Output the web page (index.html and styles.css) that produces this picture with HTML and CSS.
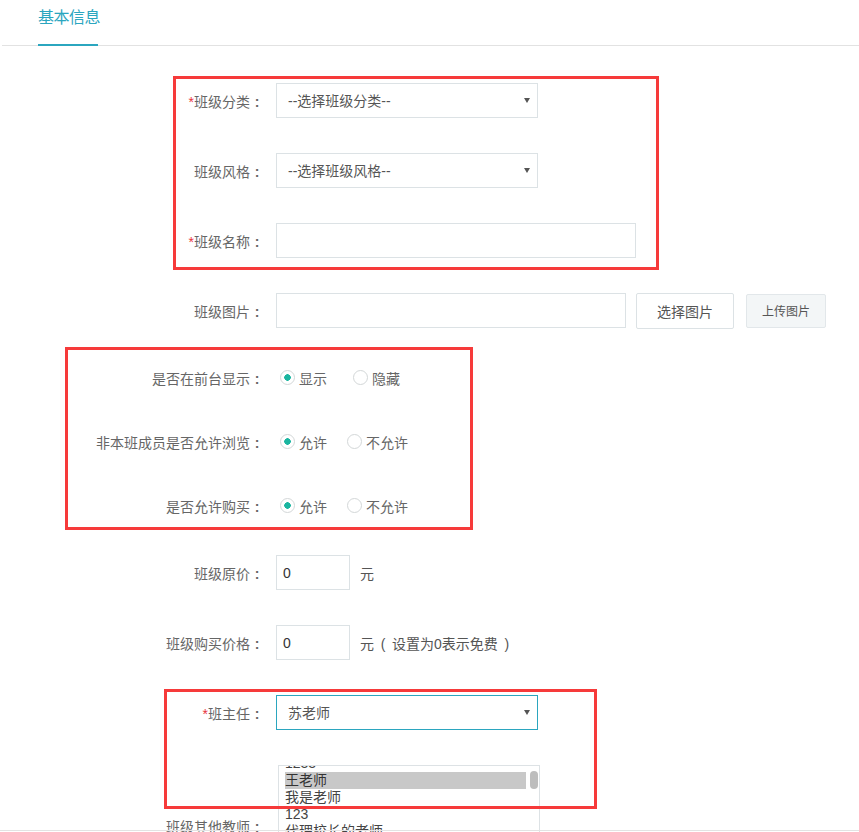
FILE: index.html
```html
<!DOCTYPE html>
<html lang="zh-CN">
<head>
  <meta charset="UTF-8">
  <title>班级设置 - 基本信息</title>
  <link rel="stylesheet" href="styles.css">
</head>
<body>

  <div class="tabs">
    <a class="tab active">基本信息</a>
  </div>

  <form class="form">
    <div class="row">
      <label class="label"><em>*</em>班级分类<i>:</i></label>
      <div class="select">
        <select><option>--选择班级分类--</option></select>
      </div>
    </div>

    <div class="row">
      <label class="label">班级风格<i>:</i></label>
      <div class="select">
        <select><option>--选择班级风格--</option></select>
      </div>
    </div>

    <div class="row">
      <label class="label"><em>*</em>班级名称<i>:</i></label>
      <input class="text name" type="text">
    </div>

    <div class="row">
      <label class="label">班级图片<i>:</i></label>
      <input class="text picture" type="text">
      <button type="button" class="btn">选择图片</button>
      <button type="button" class="btn btn-light">上传图片</button>
    </div>

    <div class="row radios">
      <label class="label">是否在前台显示<i>:</i></label>
      <label class="option wide"><input type="radio" name="show" checked>显示</label>
      <label class="option"><input type="radio" name="show">隐藏</label>
    </div>

    <div class="row radios">
      <label class="label">非本班成员是否允许浏览<i>:</i></label>
      <label class="option"><input type="radio" name="browse" checked>允许</label>
      <label class="option"><input type="radio" name="browse">不允许</label>
    </div>

    <div class="row radios">
      <label class="label">是否允许购买<i>:</i></label>
      <label class="option"><input type="radio" name="buy" checked>允许</label>
      <label class="option"><input type="radio" name="buy">不允许</label>
    </div>

    <div class="row">
      <label class="label">班级原价<i>:</i></label>
      <input class="text price" type="text" value="0">
      <span class="unit">元</span>
    </div>

    <div class="row">
      <label class="label">班级购买价格<i>:</i></label>
      <input class="text price" type="text" value="0">
      <span class="unit">元<i>(</i>设置为0表示免费<i>)</i></span>
    </div>

    <div class="row">
      <label class="label"><em>*</em>班主任<i>:</i></label>
      <div class="select focus">
        <select><option>苏老师</option></select>
      </div>
    </div>

    <div class="row teachers">
      <label class="label">班级其他教师<i>:</i></label>
      <div class="listbox">
        <ul class="list">
          <li>1233</li>
          <li class="selected">王老师</li>
          <li>我是老师</li>
          <li>123</li>
          <li>代理校长的老师</li>
          <li>李老师</li>
          <li>张老师</li>
        </ul>
        <span class="thumb"></span>
      </div>
    </div>
  </form>

  <!-- annotation boxes -->
  <div class="mark mark-1"></div>
  <div class="mark mark-2"></div>
  <div class="mark mark-3"></div>

  <div class="bottom-line"></div>

</body>
</html>
```

FILE: styles.css
```css
body {
  margin: 0;
  position: relative;
  font-family: "Liberation Sans", "Noto Sans CJK SC", sans-serif;
  font-size: 14px;
  color: #666;
  background: #fff;
}

.tabs {
  display: flex;
  align-items: flex-end;
  height: 45px;
  margin-left: 2px;
  border-bottom: 1px solid #e2e2e2;
}

.tab {
  display: block;
  width: 60px;
  margin-left: 36px;
  margin-bottom: -1px;
  height: 44px;
  line-height: 36px;
  text-align: center;
  font-size: 16px;
  letter-spacing: -0.5px;
  white-space: nowrap;
  color: #2ba6bf;
  border-bottom: 2px solid #2ba6bf;
}

.form {
  margin: 37px 0 0;
}

.row {
  display: flex;
  align-items: center;
  height: 35px;
  margin-bottom: 35px;
}

.label {
  width: 264px;
  margin-right: 12px;
  flex-shrink: 0;
  text-align: right;
  white-space: nowrap;
  color: #666;
}

.label em {
  font-style: normal;
  color: #e8323c;
}

/* full-width punctuation, glyph centred in its box */
.label i,
.unit i {
  display: inline-block;
  width: 14px;
  text-align: center;
  font-style: normal;
  font-weight: bold;
}

.select {
  position: relative;
  width: 262px;
  height: 35px;
}

.select select {
  width: 100%;
  height: 35px;
  padding: 0 11px;
  border: 1px solid #dce2e5;
  border-radius: 0;
  background: #fff;
  font: inherit;
  color: #555;
  -webkit-appearance: none;
  appearance: none;
  outline: none;
}

.select::after {
  content: "";
  position: absolute;
  right: 8px;
  top: 15px;
  border-left: 3px solid transparent;
  border-right: 3px solid transparent;
  border-top: 5px solid #555;
}

.select.focus select {
  border-color: #2ba6bf;
}

.text {
  box-sizing: border-box;
  height: 35px;
  padding: 0 6px;
  border: 1px solid #dce2e5;
  font: inherit;
  color: #333;
  outline: none;
}

.name { width: 360px; }
.picture { width: 350px; }
.price { width: 74px; }

.unit {
  margin-left: 10px;
  color: #555;
}

.unit i {
  font-weight: normal;
  margin: 0 2px;
}

.btn {
  height: 36px;
  width: 98px;
  margin-left: 10px;
  border: 1px solid #dce2e5;
  border-radius: 2px;
  background: #fff;
  font: inherit;
  color: #555;
}

.btn-light {
  width: 80px;
  height: 34px;
  margin-left: 12px;
  background: #f3f6f7;
  border-color: #e2e7ea;
  font-size: 12px;
}

.radios {
  height: 29px;
}

.option {
  display: flex;
  align-items: center;
  margin-right: 16px;
  color: #666;
}

.option.wide {
  margin-right: 22px;
}

.option input {
  -webkit-appearance: none;
  appearance: none;
  box-sizing: border-box;
  width: 15px;
  height: 15px;
  margin: 0 4px 0 4px;
  border: 1px solid #d3d7d8;
  border-radius: 50%;
  background: #fff;
}

.option input:checked {
  background: radial-gradient(circle, #1bb5a0 3px, #fff 3.5px);
}

.teachers {
  height: 122px;
  margin-top: 2px;
}

.listbox {
  position: relative;
  box-sizing: border-box;
  width: 262px;
  height: 122px;
  margin-left: 2px;
  border: 1px solid #dde2e5;
  overflow: hidden;
}

.list {
  list-style: none;
  margin: -11px 0 0;
  padding: 0 13px 0 6px;
  color: #444;
}

.list li {
  height: 17px;
  line-height: 17px;
  font-size: 14px;
  white-space: nowrap;
}

.list li.selected {
  background: #c8c8c8;
  color: #333;
}

.thumb {
  position: absolute;
  right: 1px;
  top: 5px;
  width: 8px;
  height: 18px;
  border-radius: 4px;
  background: #bdbdbd;
}

.mark {
  position: absolute;
  box-sizing: border-box;
  border: 3px solid #f63a3a;
}

.mark-1 { left: 173px; top: 76px; width: 486px; height: 194px; }
.mark-2 { left: 65px; top: 347px; width: 408px; height: 183px; }
.mark-3 { left: 164px; top: 689px; width: 433px; height: 120px; }

.bottom-line {
  position: fixed;
  left: 0;
  right: 0;
  top: 830px;
  height: 1px;
  background: #e3e3e3;
}
```
